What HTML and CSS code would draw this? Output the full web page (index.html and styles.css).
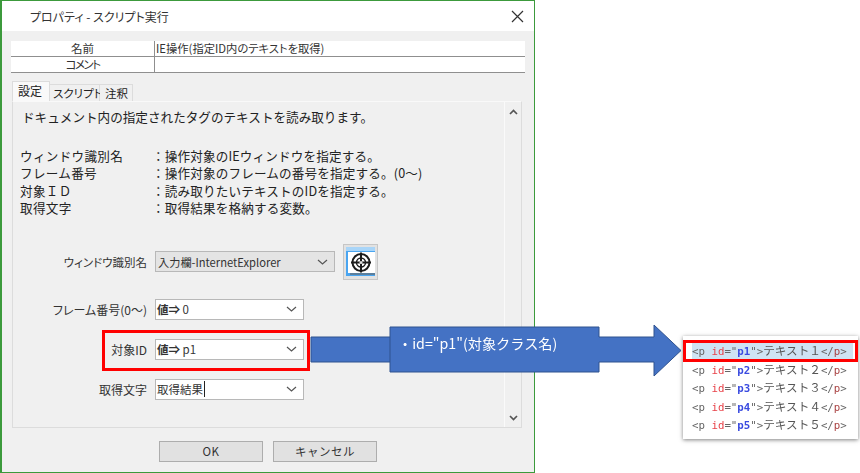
FILE: index.html
```html
<!DOCTYPE html>
<html lang="ja">
<head>
<meta charset="utf-8">
<title>プロパティ - スクリプト実行</title>
<link rel="stylesheet" href="styles.css">
</head>
<body>
<div class="stage">
  <div class="dialog">
    <div class="titlebar">
      <span class="title">プロパティ - スクリプト実行</span>
      <svg class="close" width="13" height="13" viewBox="0 0 13 13"><path d="M1 1L12 12M12 1L1 12" stroke="#333" stroke-width="1.2" fill="none"/></svg>
    </div>
    <div class="client">
      <div class="grid">
        <div class="cell label">名前</div><div class="cell value">IE操作(指定ID内のテキストを取得)</div>
        <div class="cell label narrow">コメント</div><div class="cell value"></div>
      </div>
      <div class="tabs">
        <div class="tab active">設定</div><div class="tab">スクリプト</div><div class="tab">注釈</div>
      </div>
      <div class="panel">
        <div class="content">
          <p class="lead">ドキュメント内の指定されたタグのテキストを読み取ります。</p>
          <dl class="help">
            <dt>ウィンドウ識別名</dt><dd>：操作対象のIEウィンドウを指定する。</dd>
            <dt>フレーム番号</dt><dd>：操作対象のフレームの番号を指定する。(0～)</dd>
            <dt>対象ＩＤ</dt><dd>：読み取りたいテキストのIDを指定する。</dd>
            <dt>取得文字</dt><dd>：取得結果を格納する変数。</dd>
          </dl>
          <div class="form">
            <div class="row row-win">
              <span class="flabel flabel-win">ウィンドウ識別名</span>
              <div class="combo combo-wide disabled"><span>入力欄-InternetExplorer</span><svg class="chev" width="11" height="6" viewBox="0 0 11 6"><path d="M1 1L5.5 5L10 1" stroke="#555" stroke-width="1.2" fill="none"/></svg></div>
              <div class="picker">
                <svg width="29" height="29" viewBox="0 0 29 29">
                  <rect x="0" y="0" width="29" height="29" fill="#4aa5f0"/>
                  <rect x="0" y="0" width="29" height="4" fill="#a9d5f8"/>
                  <rect x="2" y="5" width="27" height="21" fill="#fff"/>
                  <rect x="4" y="26" width="25" height="2" fill="#5c7f9c"/>
                  <circle cx="15" cy="15.500" r="8.500" fill="none" stroke="#1c1c1c" stroke-width="2"/>
                  <circle cx="15" cy="15.500" r="4.500" fill="none" stroke="#1c1c1c" stroke-width="1.4"/>
                  <path d="M15 5.500V25.500M5 15.500H25" stroke="#1c1c1c" stroke-width="2"/>
                  <circle cx="15" cy="15.500" r="1.500" fill="#ddd"/>
                </svg>
              </div>
            </div>
            <div class="row row-frame">
              <span class="flabel">フレーム番号(0～)</span>
              <div class="combo"><span><b>値⇒</b> 0</span><svg class="chev" width="11" height="6" viewBox="0 0 11 6"><path d="M1 1L5.5 5L10 1" stroke="#555" stroke-width="1.2" fill="none"/></svg></div>
            </div>
            <div class="row row-id">
              <span class="flabel">対象ID</span>
              <div class="combo"><span><b>値⇒</b> p1</span><svg class="chev" width="11" height="6" viewBox="0 0 11 6"><path d="M1 1L5.5 5L10 1" stroke="#555" stroke-width="1.2" fill="none"/></svg></div>
            </div>
            <div class="row row-get">
              <span class="flabel">取得文字</span>
              <div class="combo"><span class="caret">取得結果</span><svg class="chev" width="11" height="6" viewBox="0 0 11 6"><path d="M1 1L5.5 5L10 1" stroke="#555" stroke-width="1.2" fill="none"/></svg></div>
            </div>
          </div>
        </div>
        <div class="scroll">
          <svg width="9" height="6" viewBox="0 0 9 6"><path d="M1 5L4.5 1.5L8 5" stroke="#555" stroke-width="1.7" fill="none"/></svg>
          <svg width="9" height="6" viewBox="0 0 9 6"><path d="M1 1L4.5 4.5L8 1" stroke="#555" stroke-width="1.7" fill="none"/></svg>
        </div>
      </div>
      <div class="buttons">
        <div class="btn">OK</div><div class="btn">キャンセル</div>
      </div>
    </div>
  </div>

  <div class="redbox"></div>

  <svg class="arrow" width="372" height="54" viewBox="0 0 372 54">
    <path d="M1 13H80V3H289V13H344V1L371 26.500L344 52V38H289V48H80V38H1Z" fill="#4472c4" stroke="#2f528f" stroke-width="1"/>
    <path d="M80 13V38" stroke="#2f528f" stroke-width="1" fill="none"/>
  </svg>
  <div class="callout">・id="p1"(対象クラス名)</div>

  <div class="popup">
    <div class="code selected"><span class="t">&lt;p</span> <span class="a">id</span><span class="t">="</span><span class="v">p1</span><span class="t">"&gt;</span><span class="jp">テキスト１</span><span class="t">&lt;/</span><span class="a2">p</span><span class="t">&gt;</span></div>
    <div class="code"><span class="t">&lt;p</span> <span class="a">id</span><span class="t">="</span><span class="v">p2</span><span class="t">"&gt;</span><span class="jp">テキスト２</span><span class="t">&lt;/</span><span class="a2">p</span><span class="t">&gt;</span></div>
    <div class="code"><span class="t">&lt;p</span> <span class="a">id</span><span class="t">="</span><span class="v">p3</span><span class="t">"&gt;</span><span class="jp">テキスト３</span><span class="t">&lt;/</span><span class="a2">p</span><span class="t">&gt;</span></div>
    <div class="code"><span class="t">&lt;p</span> <span class="a">id</span><span class="t">="</span><span class="v">p4</span><span class="t">"&gt;</span><span class="jp">テキスト４</span><span class="t">&lt;/</span><span class="a2">p</span><span class="t">&gt;</span></div>
    <div class="code"><span class="t">&lt;p</span> <span class="a">id</span><span class="t">="</span><span class="v">p5</span><span class="t">"&gt;</span><span class="jp">テキスト５</span><span class="t">&lt;/</span><span class="a2">p</span><span class="t">&gt;</span></div>
    <div class="popup-red"></div>
  </div>
</div>
</body>
</html>
```
FILE: styles.css
```css
* { box-sizing: border-box; }
html, body { margin: 0; padding: 0; background: #fff; }
body { width: 860px; height: 473px; overflow: hidden; font-family: "Noto Sans CJK JP", "Noto Sans", sans-serif; color: #222; }
.stage { position: relative; width: 860px; height: 473px; filter: blur(0.35px); }

.dialog { width: 535px; height: 473px; border: 1px solid #3c9a3c; border-left-width: 2px; display: flex; flex-direction: column; background: #f0f0f0; }
.titlebar { height: 30px; flex: none; background: #fff; display: flex; align-items: center; justify-content: space-between; padding: 0 10px 0 28px; }
.title { font-size: 12px; color: #333; font-feature-settings: "palt"; }
.close { display: block; }
.client { flex: 1; padding: 10px 9px 0 9px; display: flex; flex-direction: column; }

.grid { display: grid; grid-template-columns: 144px 370px; width: 514px; height: 32px; border-right: 1px solid #8f8f8f; }
.cell { height: 16px; background: #fff; border-bottom: 1px solid #8f8f8f; font-size: 11.300px; line-height: 15px; color: #333; white-space: nowrap; font-feature-settings: "palt"; }
.label { text-align: center; border-right: 1px solid #8f8f8f; font-size: 11.500px; }
.narrow { letter-spacing: -1.500px; }
.value { padding-left: 1px; }

.tabs { display: flex; margin-top: 9px; height: 19px; align-items: flex-end; padding-left: 1px; }
.tab { height: 17px; padding: 0 3px; font-size: 11.500px; line-height: 16px; background: #f0f0f0; border: 1px solid #dcdcdc; border-bottom: none; border-left: none; white-space: nowrap; font-feature-settings: "palt"; }
.tab:nth-child(2) { width: 50px; }
.tab:nth-child(3) { width: 33px; padding-left: 5px; }
.tab.active { height: 20px; width: 38px; padding-left: 5px; background: #f9f9f9; border-left: 1px solid #dcdcdc; line-height: 18px; font-size: 12px; }

.panel { width: 510px; height: 327px; margin-left: 1px; border: 1px solid #dcdcdc; border-top-color: #f9f9f9; display: flex; }
.content { flex: 1; padding: 6px 0 0 9px; min-width: 0; }
.scroll { width: 17px; flex: none; border-left: 1px solid #fafafa; display: flex; flex-direction: column; justify-content: space-between; align-items: center; padding: 7px 0 6px; }
.scroll svg { display: block; }

.lead { margin: 0; font-size: 12.600px; line-height: 18px; white-space: nowrap; }
.help { margin: 21px 0 0 -2px; display: grid; grid-template-columns: 132px 1fr; font-size: 12.600px; line-height: 17.400px; }
.help dt { white-space: nowrap; letter-spacing: 0.3px; }
.help dd { margin: 0; white-space: nowrap; letter-spacing: 0.150px; }

.form { position: relative; margin-top: 27px; }
.row { display: flex; align-items: center; }
.flabel { width: 133px; flex: none; padding-right: 8px; text-align: right; font-size: 12px; white-space: nowrap; color: #333; font-feature-settings: "palt"; }
.flabel-win { font-size: 11.500px; }
.row-win { height: 36px; }
.row-frame { height: 21px; margin-top: 19px; }
.row-id { height: 21px; margin-top: 19px; }
.row-get { height: 21px; margin-top: 19px; }

.combo { width: 149px; height: 21px; background: #fff; border: 1px solid #b8b8b8; display: flex; align-items: center; justify-content: space-between; padding: 0 6px 0 1px; font-size: 11.500px; white-space: nowrap; color: #333; flex: none; font-feature-settings: "palt"; }
.combo b { font-weight: 700; }
.combo-wide { width: 180px; }
.combo.disabled { background: #e4e4e4; padding-left: 2px; font-size: 11.200px; }
.caret { border-right: 1px solid #222; padding-right: 1px; }
.chev { flex: none; }
.picker { width: 35px; height: 36px; margin-left: 8px; background: #e2e2e2; border: 1px solid #c6c6c6; padding: 2px; flex: none; }
.picker svg { display: block; }

.buttons { display: flex; gap: 10px; margin-top: 13px; margin-left: 148px; }
.btn { width: 104px; height: 21px; background: #e1e1e1; border: 1px solid #adadad; text-align: center; font-size: 11.500px; line-height: 19px; color: #333; letter-spacing: 0.5px; }

.redbox { position: absolute; left: 102px; top: 330px; width: 208px; height: 41px; border: 3px solid #f00; }
.arrow { position: absolute; left: 310px; top: 324px; display: block; }
.callout { position: absolute; left: 392px; top: 328px; width: 206px; height: 44px; color: #fff; font-size: 14.200px; line-height: 30px; padding-left: 6px; white-space: nowrap; }

.popup { position: absolute; left: 683px; top: 336px; width: 175px; height: 103px; background: #fff; box-shadow: 0 1px 4px rgba(0,0,0,.5); padding: 5px 5px 0 9px; }
.code { height: 18.500px; font-family: "DejaVu Sans Mono", "Noto Sans CJK JP", monospace; font-size: 10.750px; line-height: 18.500px; color: #555; white-space: nowrap; }
.code.selected { background: #cfe3f3; }
.jp { font-family: "Noto Sans CJK JP", sans-serif; font-size: 11.600px; color: #555; }
.t { color: #666; }
.a { color: #e8434a; }
.a2 { color: #a44; }
.v { color: #3a4be0; font-weight: 700; }
.popup-red { position: absolute; left: 0; top: 4px; width: 175px; height: 22px; border: 3px solid #f00; }
```
